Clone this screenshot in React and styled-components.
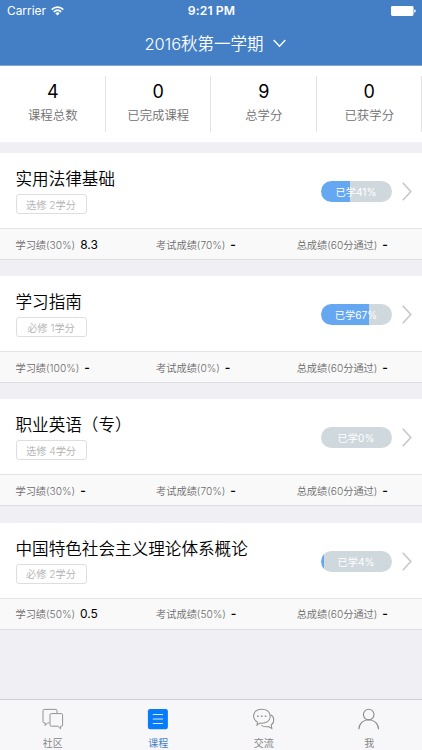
import React from 'react'
import styled, { createGlobalStyle } from 'styled-components'

const stats = [
  { value: 4, label: '课程总数' },
  { value: 0, label: '已完成课程' },
  { value: 9, label: '总学分' },
  { value: 0, label: '已获学分' },
]

const courses = [
  { name: '实用法律基础', tag: '选修 2学分', percent: 41, study: 30, score: '8.3', exam: 70 },
  { name: '学习指南', tag: '必修 1学分', percent: 67, study: 100, score: '-', exam: 0 },
  { name: '职业英语（专）', tag: '选修 4学分', percent: 0, study: 30, score: '-', exam: 70 },
  { name: '中国特色社会主义理论体系概论', tag: '必修 2学分', percent: 4, study: 50, score: '0.5', exam: 50 },
]

const WifiIcon = () => (
  <svg width="13" height="10" viewBox="0 0 13 10" fill="none" stroke="#fff" strokeWidth="1.6">
    <path d="M0.7 3.6 C4 0.3 9 0.3 12.3 3.6" />
    <path d="M2.8 5.8 C5 3.7 8 3.7 10.2 5.8" />
    <path d="M4.3 7.2 Q6.5 5.4 8.7 7.2 L6.5 9.5 Z" fill="#fff" stroke="none" />
  </svg>
)

const BatteryIcon = () => (
  <svg width="25" height="10" viewBox="0 0 25 10" fill="#fff">
    <rect width="22.5" height="10" rx="1.4" />
    <path d="M23.2 3.3 Q24.8 3.8 24.8 5 Q24.8 6.2 23.2 6.7 Z" />
  </svg>
)

const DownIcon = () => (
  <svg width="13" height="9" viewBox="0 0 13 9" fill="none" stroke="#fff" strokeWidth="1.3">
    <path d="M0.7 1 L6.5 7.3 L12.3 1" />
  </svg>
)

const ArrowIcon = () => (
  <svg width="10" height="19" viewBox="0 0 10 19" fill="none" stroke="#c7c7cc" strokeWidth="1.6">
    <path d="M0.8 0.8 L8.8 9.5 L0.8 18.2" />
  </svg>
)

const CommunityIcon = () => (
  <svg width="22" height="22" viewBox="0 0 22 22" fill="none" stroke="#929292" strokeWidth="1">
    <path d="M7 14.8 H5.8 L3.2 17.5 V14.8 H2.2 Q1 14.8 1 13.6 V2.6 Q1 1.4 2.2 1.4 H13.8 Q15 1.4 15 2.6 V5.2" />
    <path d="M9.2 5.6 H19.4 Q20.6 5.6 20.6 6.8 V17 Q20.6 18.2 19.4 18.2 H18.6 V20.8 L15.8 18.2 H9.2 Q8 18.2 8 17 V6.8 Q8 5.6 9.2 5.6 Z" />
  </svg>
)

const CourseIcon = () => (
  <svg width="22" height="22" viewBox="0 0 22 22">
    <rect x="0.9" y="1" width="20" height="20.2" rx="2.2" fill="#087bfa" />
    <path d="M5.8 6.5 H16 M5.8 11 H16 M5.8 15.5 H16" stroke="#d9ebff" strokeWidth="1" />
  </svg>
)

const ChatIcon = () => (
  <svg width="22" height="22" viewBox="0 0 22 22" fill="none" stroke="#929292" strokeWidth="1.1">
    <path d="M4.5 14.1 C-1.8 10.4 -0.4 1.3 8.8 1.3 C18.6 1.3 19.6 12 12.5 14.6 Q9.7 15.6 7 15 L4 17.1 Z" />
    <path d="M17.6 6.8 C21.7 9 21.8 14.3 18.3 17 L18.8 20.5 L15.4 18.5 Q11.2 19.4 8.4 17.4" />
    <path d="M4 8.2 H5.6 M7.9 8.2 H9.5 M11.8 8.2 H13.4" strokeWidth="1.6" />
  </svg>
)

const MeIcon = () => (
  <svg width="22" height="22" viewBox="0 0 22 22" fill="none" stroke="#8c8c8c" strokeWidth="1.1">
    <circle cx="10.7" cy="6.6" r="5.3" />
    <path d="M0.8 21.3 C1.4 8.6 20 8.6 20.6 21.3" />
  </svg>
)

const tabs = [
  { label: '社区', icon: <CommunityIcon /> },
  { label: '课程', icon: <CourseIcon />, active: true },
  { label: '交流', icon: <ChatIcon /> },
  { label: '我', icon: <MeIcon /> },
]

const App = () => {
  return (
    <Container>
      <GlobalStyle />
      <Header>
        <StatusBar>
          <Carrier>Carrier <WifiIcon /></Carrier>
          <Time>9:21 PM</Time>
          <Battery><BatteryIcon /></Battery>
        </StatusBar>
        <Term>2016秋第一学期 <DownIcon /></Term>
      </Header>

      <Stats>
        {stats.map((item) => (
          <Stat key={item.label}>
            <StatValue>{item.value}</StatValue>
            <StatLabel>{item.label}</StatLabel>
          </Stat>
        ))}
      </Stats>

      <CourseList>
        {courses.map((course) => (
          <Card key={course.name}>
            <CardTop>
              <Info>
                <Name>{course.name}</Name>
                <Tag>{course.tag}</Tag>
              </Info>
              <Action>
                <Progress $percent={course.percent}>已学{course.percent}%</Progress>
                <ArrowIcon />
              </Action>
            </CardTop>
            <Scores>
              <Score>学习绩({course.study}%)<Point $empty={course.score === '-'}>{course.score}</Point></Score>
              <Score>考试成绩({course.exam}%)<Point $empty>-</Point></Score>
              <Score>总成绩(60分通过)<Point $empty>-</Point></Score>
            </Scores>
          </Card>
        ))}
      </CourseList>

      <TabBar>
        {tabs.map((tab) => (
          <Tab key={tab.label} $active={tab.active}>
            {tab.icon}
            <span>{tab.label}</span>
          </Tab>
        ))}
      </TabBar>
    </Container>
  )
}

export default App

const GlobalStyle = createGlobalStyle`
body{
  margin : 0;
}

*{
  box-sizing : border-box;
}

svg{
  display : block;
  flex-shrink : 0;
}
`

const Container = styled.div`
display : flex;
flex-direction : column;
width : 422px;
height : 750px;
overflow : hidden;
background-color : #efeff4;
font-family : Inter, "Noto Sans CJK SC", sans-serif;
font-weight : 350;
white-space : nowrap;
`

const Header = styled.div`
height : 66px;
flex-shrink : 0;
background-color : #447fc5;
border-bottom : 1px solid #82a7d6;
color : #fff;
`

const StatusBar = styled.div`
display : grid;
grid-template-columns : 1fr auto 1fr;
align-items : center;
height : 22px;
padding : 0 6px 0 7px;
font-size : 12px;
line-height : 22px;
`

const Carrier = styled.div`
display : flex;
align-items : center;
gap : 5px;
font-size : 11.9px;
font-weight : 400;
`

const Time = styled.div`
font-weight : 600;
font-size : 12.2px;
letter-spacing : 0.1px;
`

const Battery = styled.div`
display : flex;
justify-content : flex-end;
`

const Term = styled.div`
display : flex;
align-items : center;
justify-content : center;
gap : 9px;
height : 42px;
padding-left : 8px;
font-size : 16.5px;
`

const Stats = styled.div`
display : grid;
grid-template-columns : repeat(4, 1fr);
flex-shrink : 0;
height : 76px;
padding : 10px 0;
background-color : #fff;
`

const Stat = styled.div`
display : flex;
flex-direction : column;
align-items : center;
height : 56px;
padding-left : 1px;
border-right : 1px solid #e3e3e5;
`

const StatValue = styled.div`
margin-top : 3px;
font-size : 18px;
font-weight : 400;
line-height : 26px;
color : #000;
`

const StatLabel = styled.div`
margin-top : 1px;
font-size : 12.4px;
line-height : 20px;
color : #707070;
`

const CourseList = styled.div`
display : flex;
flex-direction : column;
flex : 1;
gap : 16.2px;
padding-top : 11px;
`

const Card = styled.div`
height : 107px;
flex-shrink : 0;
background-color : #fff;
border-bottom : 1px solid #dfdfe3;
`

const CardTop = styled.div`
display : flex;
align-items : center;
height : 76px;
padding : 0 10px 0 15.5px;
border-bottom : 1px solid #e4e4e6;
`

const Info = styled.div`
flex : 1;
`

const Name = styled.div`
font-size : 16.6px;
line-height : 24px;
color : #000;
`

const Tag = styled.div`
display : flex;
align-items : center;
justify-content : center;
width : 71px;
height : 20px;
margin-top : 3px;
border : 1px solid #dedede;
border-radius : 3px;
font-size : 10.2px;
color : #b0b0b0;
`

const Action = styled.div`
display : flex;
align-items : center;
gap : 10.5px;
padding-top : 2px;
`

const Progress = styled.div`
width : 71px;
height : 21px;
border-radius : 11px;
background : ${({ $percent }) => `linear-gradient(to right, #65a7f1 ${$percent}%, #cfd8dd ${$percent}%)`};
color : #fff;
font-size : 10.2px;
font-weight : 400;
line-height : 22px;
text-align : center;
`

const Scores = styled.div`
display : grid;
grid-template-columns : repeat(3, 140.6px);
align-items : center;
height : 30px;
padding : 1px 0 0 15.5px;
background-color : #f9f9f9;
`

const Score = styled.div`
display : flex;
align-items : center;
gap : 5px;
font-size : 10.2px;
line-height : 20px;
color : #6b6b6b;
`

const Point = styled.b`
font-size : 12px;
font-weight : ${({ $empty }) => ($empty ? 600 : 400)};
color : #000;
`

const TabBar = styled.div`
display : grid;
grid-template-columns : repeat(4, 1fr);
flex-shrink : 0;
height : 51px;
border-top : 1px solid #cfcfd3;
background-color : #f7f7f9;
`

const Tab = styled.div`
display : flex;
flex-direction : column;
align-items : center;
padding-top : 8px;
color : ${({ $active }) => ($active ? '#447fc5' : '#868686')};

span{
  margin-top : 4px;
  font-size : 10px;
  font-weight : 400;
  line-height : 18px;
}
`
